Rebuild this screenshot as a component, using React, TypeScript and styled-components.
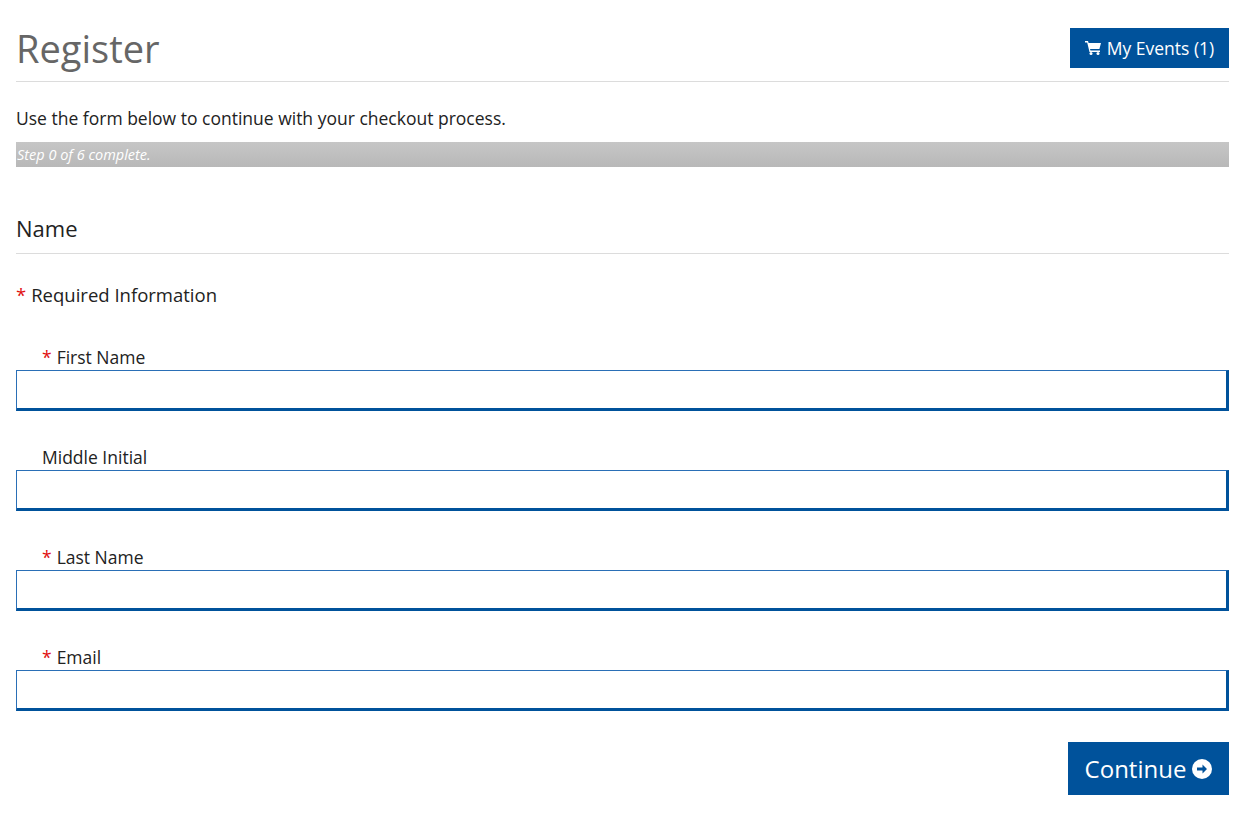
import React from "react";
import styled, { createGlobalStyle } from "styled-components";

const Global = createGlobalStyle`
  body { margin: 0; font-family: "Open Sans", sans-serif; color: #222; background: #fff; }
  * { box-sizing: border-box; }
`;
const Page = styled.div`padding: 0 16px;`;
const Header = styled.div`
  display: flex; justify-content: space-between; align-items: center;
  height: 82px; border-bottom: 1px solid #dcdcdc; padding-top: 14px;
`;
const Title = styled.h1`margin: 0; font-weight: 400; font-size: 38px; color: #666;`;
const EventsBtn = styled.button`
  display: flex; align-items: center; gap: 5px; height: 40px; width: 159px; justify-content: center;
  background: #00529b; color: #fff; border: none; font: 17.5px "Open Sans", sans-serif;
`;
const Intro = styled.p`margin: 24px 0 12px; font-size: 17.5px; line-height: 24px;`;
const Progress = styled.div`
  height: 25px; background: linear-gradient(#c6c6c6, #b8b8b8); color: #fff;
  font-style: italic; font-size: 14.5px; line-height: 25px; padding-left: 1px;
`;
const Section = styled.h2`
  margin: 46px 0 0; font-weight: 400; font-size: 22px; padding-bottom: 10px; border-bottom: 1px solid #dcdcdc;
`;
const Req = styled.div`margin: 28px 0 38px; font-size: 18.5px;`;
const Star = styled.span`color: #e01010; margin-right: 5px;`;
const Field = styled.div`margin-bottom: 34px;`;
const Label = styled.label`display: block; margin-left: 26px; font-size: 17.5px; height: 24px; line-height: 24px;`;
const Input = styled.input`
  display: block; width: 100%; height: 41px; border: 1px solid #2a6fb6;
  border-bottom: 3px solid #00529b; border-right: 3px solid #00529b; margin-top: 1px;
`;
const Footer = styled.div`display: flex; justify-content: flex-end; margin-top: -3px;`;
const ContinueBtn = styled.button`
  display: flex; align-items: center; gap: 6px; height: 53px; width: 161px; justify-content: center;
  background: #00529b; color: #fff; border: none; font: 24px "Open Sans", sans-serif;
`;

const Cart = () => (
  <svg width="17" height="15" viewBox="0 0 17 15" fill="#fff">
    <path d="M0 1h3l.6 2H16l-1.6 6H5l.5 1.5H15V12H4.5L2.2 2.5H0z" />
    <circle cx="6" cy="13.5" r="1.5" /><circle cx="13" cy="13.5" r="1.5" />
  </svg>
);
const Arrow = () => (
  <svg width="20" height="20" viewBox="0 0 20 20">
    <circle cx="10" cy="10" r="10" fill="#fff" />
    <path d="M5 8.5h5.5V5.5L15 10l-4.5 4.5v-3H5z" fill="#00529b" />
  </svg>
);

const fields = [
  { name: "First Name", req: true },
  { name: "Middle Initial", req: false },
  { name: "Last Name", req: true },
  { name: "Email", req: true },
];

export default function App() {
  return (
    <Page>
      <Global />
      <Header>
        <Title>Register</Title>
        <EventsBtn><Cart /> My Events (1)</EventsBtn>
      </Header>
      <Intro>Use the form below to continue with your checkout process.</Intro>
      <Progress>Step 0 of 6 complete.</Progress>
      <Section>Name</Section>
      <Req><Star>*</Star>Required Information</Req>
      {fields.map((f) => (
        <Field key={f.name}>
          <Label>{f.req && <Star>*</Star>}{f.name}</Label>
          <Input />
        </Field>
      ))}
      <Footer><ContinueBtn>Continue <Arrow /></ContinueBtn></Footer>
    </Page>
  );
}
